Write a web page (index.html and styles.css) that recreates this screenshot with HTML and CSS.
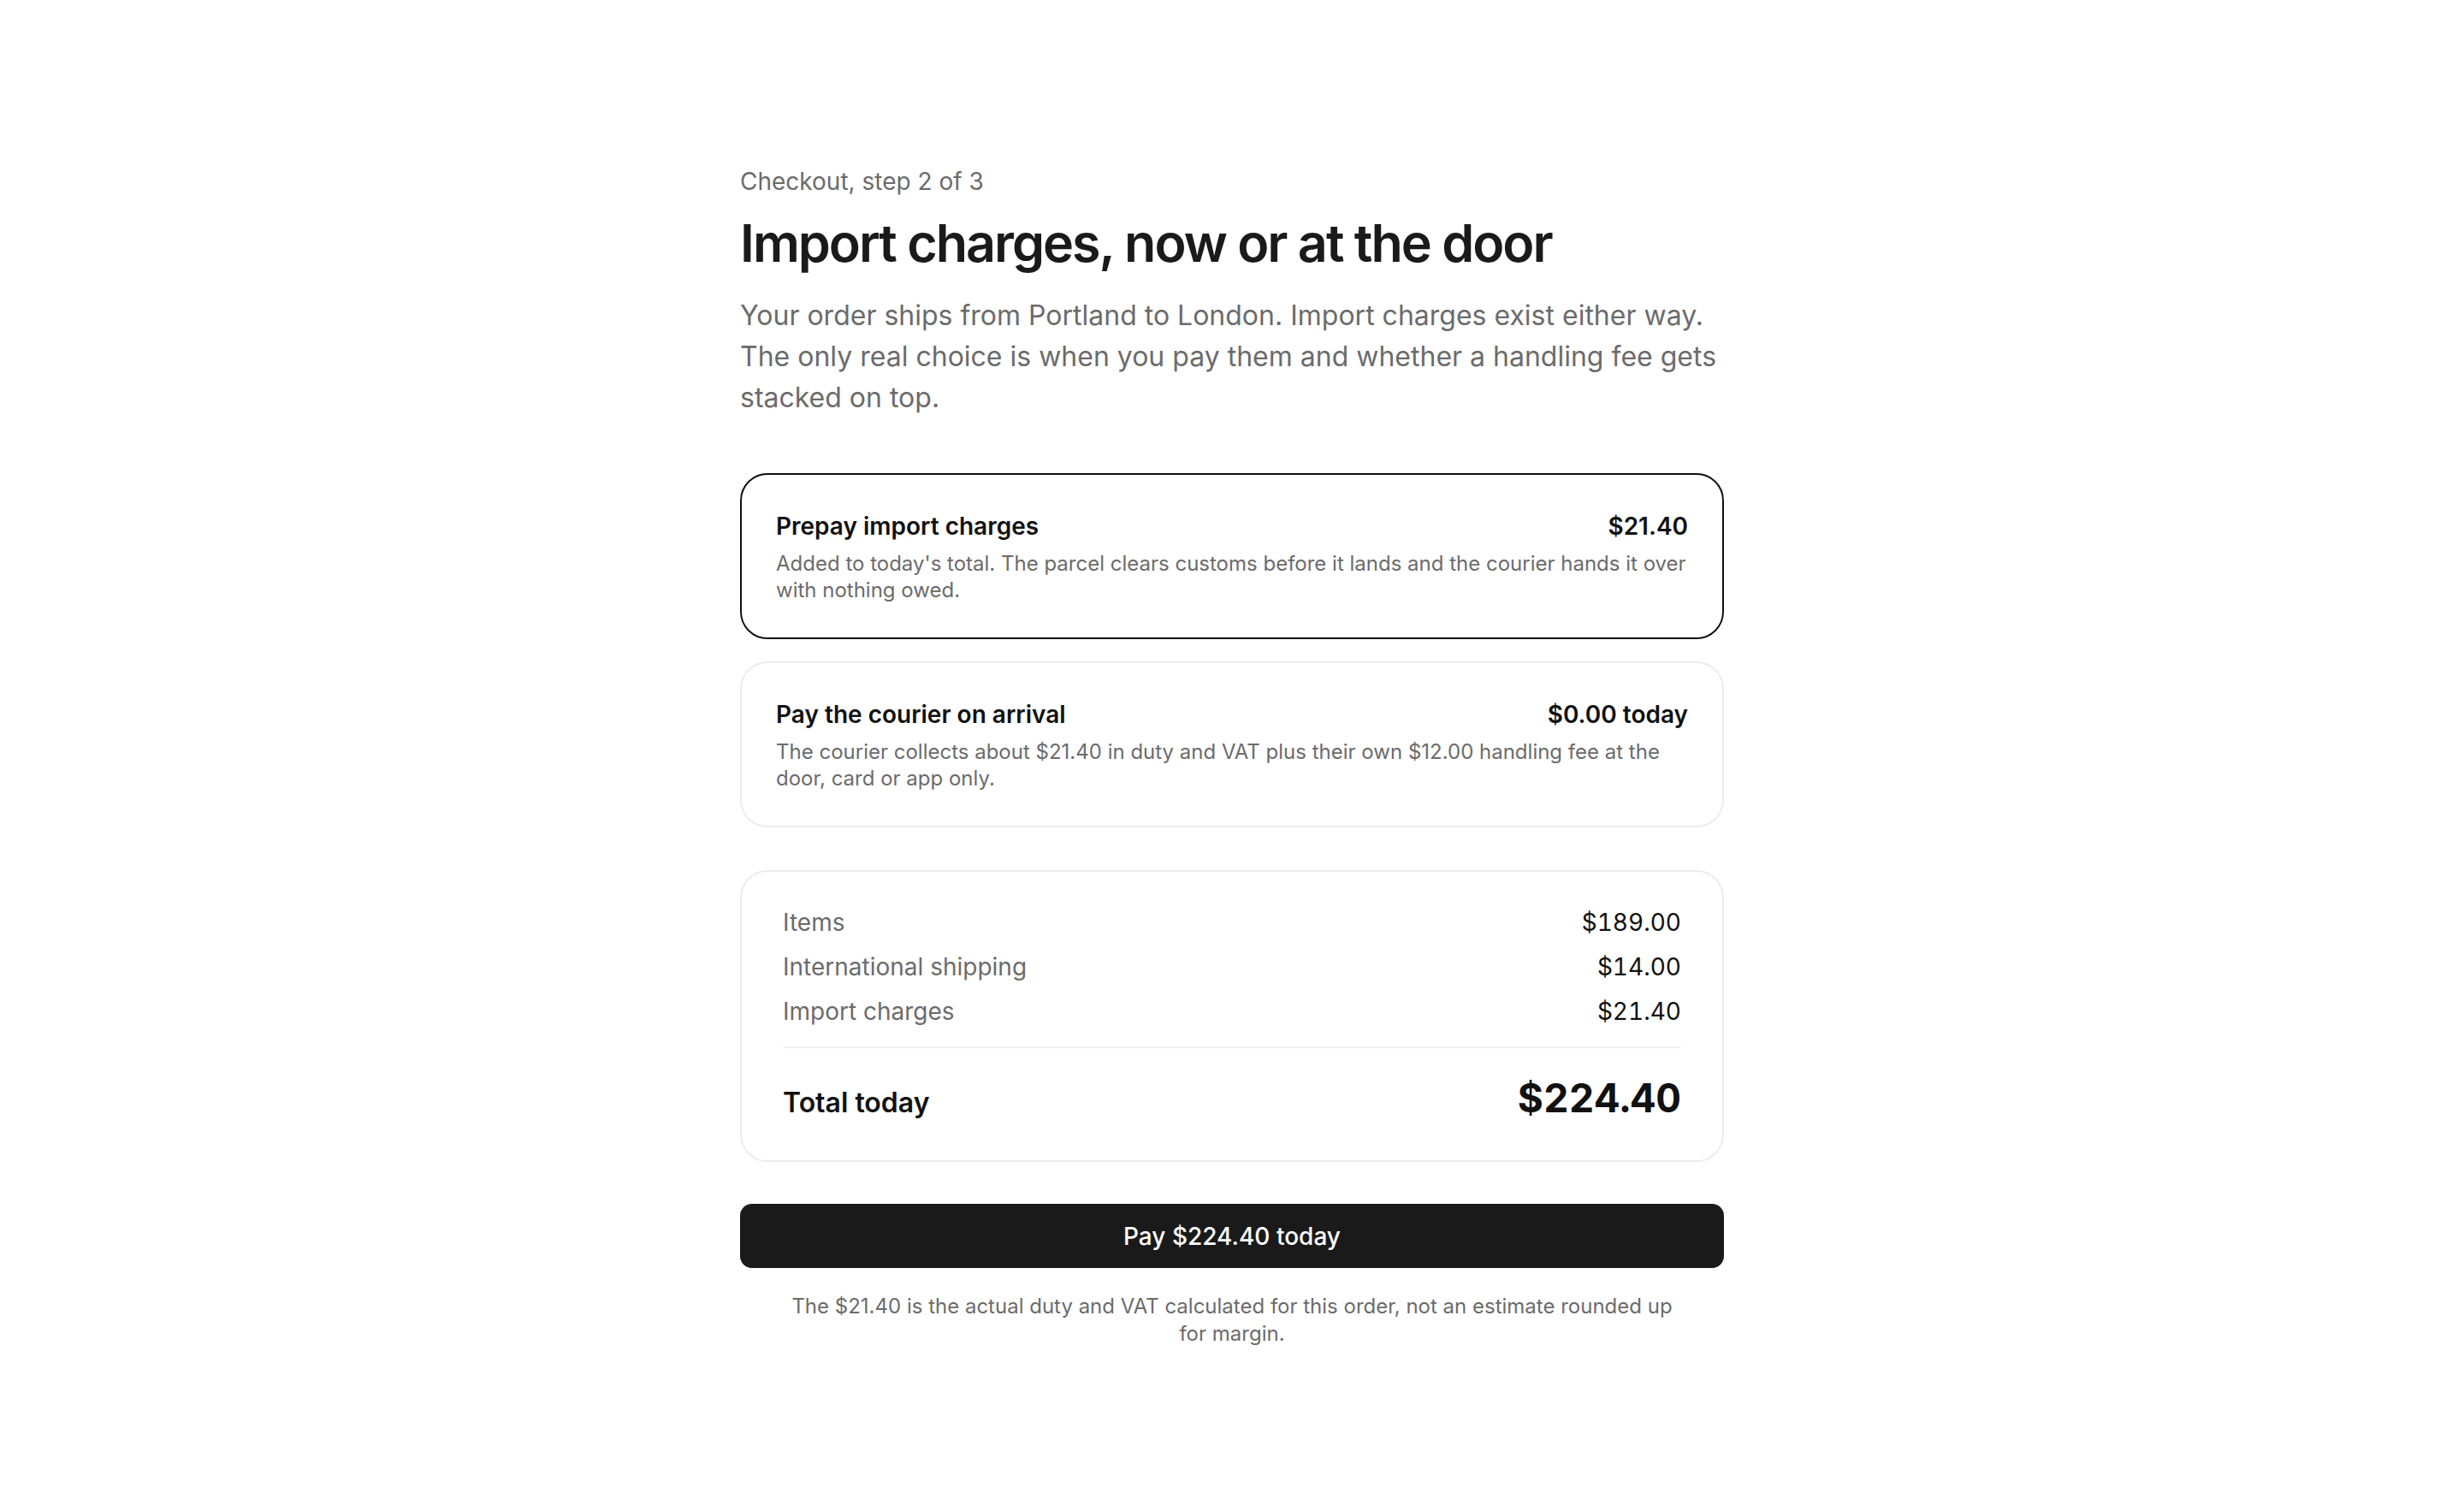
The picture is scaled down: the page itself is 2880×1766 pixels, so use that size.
FILE: index.html
```html
<!DOCTYPE html>
<html lang="en">
<head>
<meta charset="utf-8">
<title>Import charges, now or at the door</title>
<link rel="stylesheet" href="styles.css">
</head>
<body>
<main class="page">
  <p class="step">Checkout, step 2 of 3</p>
  <h1 class="title">Import charges, now or at the door</h1>
  <p class="lead">Your order ships from Portland to London. Import charges exist either way. The only real choice is when you pay them and whether a handling fee gets stacked on top.</p>

  <div class="options">
    <div class="option option-selected">
      <div class="option-head">
        <span class="option-name">Prepay import charges</span>
        <span class="option-price">$21.40</span>
      </div>
      <p class="option-desc">Added to today's total. The parcel clears customs before it lands and the courier hands it over with nothing owed.</p>
    </div>
    <div class="option">
      <div class="option-head">
        <span class="option-name">Pay the courier on arrival</span>
        <span class="option-price">$0.00 today</span>
      </div>
      <p class="option-desc">The courier collects about $21.40 in duty and VAT plus their own $12.00 handling fee at the door, card or app only.</p>
    </div>
  </div>

  <section class="summary">
    <div class="row"><span class="label">Items</span><span class="amount">$189.00</span></div>
    <div class="row"><span class="label">International shipping</span><span class="amount">$14.00</span></div>
    <div class="row"><span class="label">Import charges</span><span class="amount">$21.40</span></div>
    <div class="row total"><span class="total-label">Total today</span><span class="total-amount">$224.40</span></div>
  </section>

  <button class="pay" type="button">Pay $224.40 today</button>
  <p class="note">The $21.40 is the actual duty and VAT calculated for this order, not an estimate rounded up for margin.</p>
</main>
</body>
</html>
```
FILE: styles.css
```css
* { box-sizing: border-box; }

html, body {
  margin: 0;
  padding: 0;
  background: #ffffff;
}

body {
  font-family: Inter, "Noto Sans", sans-serif;
  color: #1a1a1a;
}

.page {
  width: 1150px;
  margin: 0 auto;
  padding: 193px 0 120px;
  display: flex;
  flex-direction: column;
}

.step {
  margin: 0;
  font-size: 28px;
  line-height: 39px;
  color: #6b6b6b;
}

.title {
  margin: 15px 0 0;
  font-size: 61px;
  line-height: 74px;
  font-weight: 600;
  letter-spacing: -0.033em;
  color: #1a1a1a;
}

.lead {
  margin: 24px 0 0;
  font-size: 32px;
  line-height: 48px;
  color: #6b6b6b;
}

.options {
  margin-top: 64px;
  display: flex;
  flex-direction: column;
  gap: 26px;
}

.option {
  border: 2px solid #ececec;
  border-radius: 32px;
  padding: 40px;
  background: #fff;
}

.option-selected {
  border-color: #111111;
}

.option-head {
  display: flex;
  justify-content: space-between;
  align-items: baseline;
  font-size: 28px;
  line-height: 40px;
  font-weight: 600;
  color: #111111;
}

.option-desc {
  margin: 8px 0 0;
  font-size: 24px;
  line-height: 31px;
  color: #6b6b6b;
}

.summary {
  margin-top: 50px;
  border: 2px solid #ececec;
  border-radius: 32px;
  padding: 38px 48px 43px;
  display: flex;
  flex-direction: column;
  gap: 10px;
}

.row {
  display: flex;
  justify-content: space-between;
  align-items: baseline;
  line-height: 42px;
}

.label {
  font-size: 28px;
  color: #6b6b6b;
}

.amount {
  font-size: 28px;
  font-variant-numeric: tabular-nums;
  color: #111111;
}

.total {
  margin-top: 10px;
  border-top: 2px solid #eeeeee;
  padding-top: 28px;
}

.total-label {
  font-size: 32px;
  font-weight: 600;
  color: #111111;
}

.total-amount {
  font-size: 46px;
  line-height: 60px;
  font-weight: 700;
  font-variant-numeric: tabular-nums;
  color: #111111;
}

.pay {
  margin-top: 49px;
  height: 75px;
  width: 100%;
  border: 0;
  border-radius: 14px;
  background: #1a1a1a;
  color: #ffffff;
  font-family: Inter, "Noto Sans", sans-serif;
  font-size: 28px;
  font-weight: 500;
  cursor: pointer;
}

.note {
  margin: 29px 0 0;
  padding: 0 48px;
  text-align: center;
  font-size: 24px;
  line-height: 32px;
  color: #6b6b6b;
}
```
